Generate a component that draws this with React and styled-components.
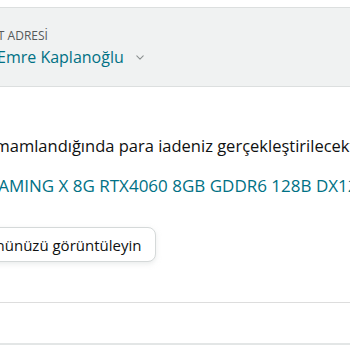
import styled, { createGlobalStyle } from "styled-components";

const GlobalStyle = createGlobalStyle`
    html, body {
        margin: 0;
        padding: 0;
        background: #ffffff;
    }
    body {
        font-family: "Open Sans", "Liberation Sans", sans-serif;
        color: #0f1111;
    }
`;

const App = () => {
    return (
        <Page>
            <GlobalStyle />
            <AddressBar>
                <Label shift={50}>TESLİMAT ADRESİ</Label>
                <NameRow shift={3}>
                    <Name>Emre Kaplanoğlu</Name>
                    <Chevron viewBox="0 0 10 6">
                        <path d="M1 1l4 4 4-4" />
                    </Chevron>
                </NameRow>
            </AddressBar>
            <Body>
                <Line shift={58}>İade tamamlandığında para iadeniz gerçekleştirilecektir.</Line>
                <ProductLink shift={48}>MSI GAMING X 8G RTX4060 8GB GDDR6 128B DX12</ProductLink>
                <Button shift={80}>İade ürününüzü görüntüleyin</Button>
            </Body>
            <Divider />
            <Footer />
        </Page>
    );
};

const Page = styled.div`
    width: 350px;
    height: 350px;
    overflow: hidden;
    padding-top: 7px;
    box-sizing: border-box;
`;

const AddressBar = styled.section`
    background: #f0f2f2;
    border-top: 1px solid #dcdfdf;
    border-bottom: 1px solid #dcdfdf;
    height: 80px;
    padding-top: 20px;
    box-sizing: border-box;
`;

const Label = styled.div`
    margin-left: -${(p) => p.shift}px;
    font-size: 12px;
    line-height: 16px;
    color: #565959;
    white-space: nowrap;
`;

const NameRow = styled.div`
    margin-left: -${(p) => p.shift}px;
    margin-top: 2px;
    display: flex;
    align-items: center;
    gap: 12px;
`;

const Name = styled.span`
    font-size: 16px;
    line-height: 22px;
    color: #007185;
    white-space: nowrap;
`;

const Chevron = styled.svg`
    width: 8px;
    height: 5px;
    fill: none;
    stroke: #8a8f8f;
    stroke-width: 1.3;
    stroke-linecap: round;
    stroke-linejoin: round;
`;

const Body = styled.div`
    padding-top: 47px;
    display: flex;
    flex-direction: column;
    align-items: flex-start;
`;

const Line = styled.p`
    margin: 0 0 0 -${(p) => p.shift}px;
    font-size: 16.5px;
    line-height: 24px;
    white-space: nowrap;
`;

const ProductLink = styled.a`
    margin: 16px 0 0 -${(p) => p.shift}px;
    font-size: 17px;
    line-height: 24px;
    color: #007185;
    white-space: nowrap;
    text-decoration: none;
`;

const Button = styled.button`
    margin: 29px 0 0 -${(p) => p.shift}px;
    height: 35px;
    padding: 0 14px 0 16px;
    border: 1px solid #d5d9d9;
    border-radius: 8px;
    background: #ffffff;
    box-shadow: 0 2px 5px rgba(213, 217, 217, 0.5);
    font-family: "Open Sans", "Liberation Sans", sans-serif;
    font-size: 15px;
    color: #0f1111;
    white-space: nowrap;
`;

const Divider = styled.hr`
    margin: 40px 0 0;
    border: 0;
    border-top: 1px solid #dddddd;
`;

const Footer = styled.div`
    margin-top: 40px;
    border-top: 2px solid #e3e6e6;
`;

export default App;
